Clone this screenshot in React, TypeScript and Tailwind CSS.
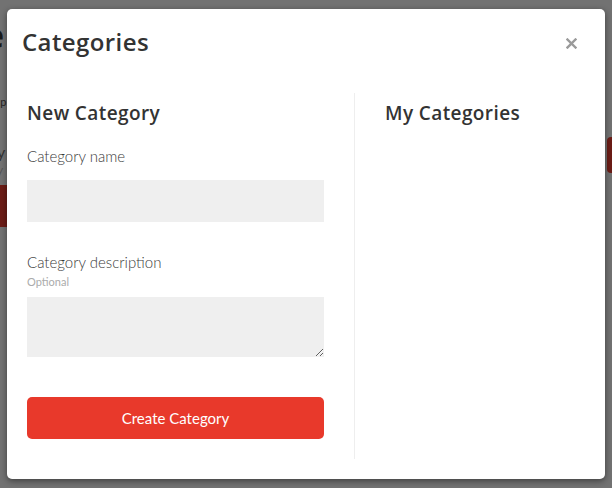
export default function App() {
  return (
    <div className="relative h-[488px] w-[612px] overflow-hidden bg-[#727272] pl-[7px] pt-[9px] font-['Lato',sans-serif]">
      {/* page behind the overlay */}
      <div className="absolute left-[-16px] top-[18px] text-[34px] font-bold leading-none text-[#1a1a1a] font-['Open_Sans',sans-serif]">
        e
      </div>
      <div className="absolute left-[-6px] top-[94px] text-[11px] text-[#222]">up</div>
      <div className="absolute left-[-3px] top-[143px] text-[16px] leading-[18px] text-[#333]">y</div>
      <div className="absolute left-[-3px] top-[164px] text-[12px] leading-[12px] text-[#555]">y</div>
      <div className="absolute left-0 top-[185px] h-[42px] w-[8px] bg-[#6b1c16]" />
      <div className="absolute left-[607px] top-[137px] h-[36px] w-[10px] rounded-[4px] bg-[#6b1c16]" />

      {/* modal */}
      <div className="relative flex h-[470px] w-[598px] flex-col rounded-[5px] bg-white shadow-[0_2px_6px_rgba(0,0,0,0.45)]">
        <div className="flex items-start justify-between pl-[15px] pr-[28px] pt-[17px]">
          <h2 className="text-[24px] font-semibold leading-[32px] tracking-[0.4px] text-[#333] font-['Open_Sans',sans-serif]">
            Categories
          </h2>
          <svg width="11" height="11" viewBox="0 0 11 11" className="mt-[12px]">
            <path d="M1.5 1.5l8 8M9.5 1.5l-8 8" stroke="#9a9a9a" strokeWidth="2.4" strokeLinecap="square" />
          </svg>
        </div>

        <div className="mt-[35px] flex flex-1 pb-[20px]">
          <div className="ml-[20px] mr-[30px] flex w-[297px] flex-col">
            <h3 className="mt-[7px] text-[19px] font-semibold leading-[26px] tracking-[0.4px] text-[#333] font-['Open_Sans',sans-serif]">
              New Category
            </h3>
            <label className="mt-[20px] text-[15px] font-light leading-[20px] text-[#3a3a3a]">Category name</label>
            <input className="mt-[14px] h-[42px] w-full bg-[#efefef] outline-none" />
            <label className="mt-[30px] text-[15px] font-light leading-[20px] text-[#3a3a3a]">Category description</label>
            <span className="mt-[3px] text-[11px] leading-[14px] text-[#ababab]">Optional</span>
            <textarea className="mt-[8px] h-[60px] w-full resize-y bg-[#efefef] outline-none" />
            <button className="mt-[40px] h-[42px] w-full rounded-[5px] bg-[#e8392b] text-[15px] text-white">
              Create Category
            </button>
          </div>
          <div className="w-px bg-[#eeeeee]" />
          <div className="flex-1 pl-[30px]">
            <h3 className="mt-[7px] text-[19px] font-semibold leading-[26px] tracking-[0.4px] text-[#333] font-['Open_Sans',sans-serif]">
              My Categories
            </h3>
          </div>
        </div>
      </div>
    </div>
  );
}
